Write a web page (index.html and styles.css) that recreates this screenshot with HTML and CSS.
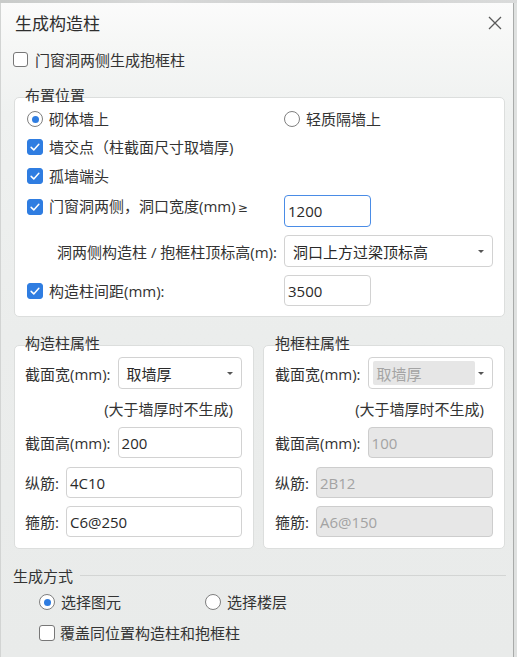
FILE: index.html
```html
<!DOCTYPE html>
<html lang="zh-CN">
<head>
<meta charset="utf-8">
<title>生成构造柱</title>
<link rel="stylesheet" href="styles.css">
</head>
<body>
<div class="strip"></div>
<div class="window">
  <div class="titlebar">
    <div class="title">生成构造柱</div>
    <svg class="close" width="14" height="14" viewBox="0 0 14 14"><path d="M1 1 L13 13 M13 1 L1 13" stroke="#5a5a5a" stroke-width="1.3" fill="none"/></svg>
  </div>

  <label class="toprow"><span class="cb"></span><span>门窗洞两侧生成抱框柱</span></label>

  <div class="panel panel-main">
    <div class="legend legend-main">布置位置</div>
    <div class="grow r1">
      <label class="opt"><span class="radio on"></span><span>砌体墙上</span></label>
      <label class="opt"><span class="radio"></span><span>轻质隔墙上</span></label>
    </div>
    <div class="grow r2">
      <label class="opt"><span class="cb on"><svg viewBox="0 0 16 16"><path d="M3.6 8.4 L6.6 11.3 L12.4 4.8" fill="none" stroke="#fff" stroke-width="1.7" stroke-linecap="round" stroke-linejoin="round"/></svg></span><span>墙交点（柱截面尺寸取墙厚)</span></label>
    </div>
    <div class="grow r3">
      <label class="opt"><span class="cb on"><svg viewBox="0 0 16 16"><path d="M3.6 8.4 L6.6 11.3 L12.4 4.8" fill="none" stroke="#fff" stroke-width="1.7" stroke-linecap="round" stroke-linejoin="round"/></svg></span><span>孤墙端头</span></label>
    </div>
    <div class="grow r4">
      <label class="opt top"><span class="cb on"><svg viewBox="0 0 16 16"><path d="M3.6 8.4 L6.6 11.3 L12.4 4.8" fill="none" stroke="#fff" stroke-width="1.7" stroke-linecap="round" stroke-linejoin="round"/></svg></span><span>门窗洞两侧，洞口宽度(mm)<span class="ge">≥</span></span></label>
      <div class="input short focus">1200</div>
    </div>
    <div class="grow r5">
      <div class="rlabel">洞两侧构造柱 / 抱框柱顶标高(m):</div>
      <div class="select"><span>洞口上方过梁顶标高</span><span class="arrow"></span></div>
    </div>
    <div class="grow r6">
      <label class="opt"><span class="cb on"><svg viewBox="0 0 16 16"><path d="M3.6 8.4 L6.6 11.3 L12.4 4.8" fill="none" stroke="#fff" stroke-width="1.7" stroke-linecap="round" stroke-linejoin="round"/></svg></span><span>构造柱间距(mm):</span></label>
      <div class="input short">3500</div>
    </div>
  </div>

  <div class="pair">
    <div class="panel sub left">
      <div class="legend">构造柱属性</div>
      <div class="frow fa"><span class="flabel">截面宽(mm):</span><div class="select"><span>取墙厚</span><span class="arrow"></span></div></div>
      <div class="note">(大于墙厚时不生成)</div>
      <div class="frow fc"><span class="flabel">截面高(mm):</span><div class="input">200</div></div>
      <div class="frow fd"><span class="flabel">纵筋:</span><div class="input">4C10</div></div>
      <div class="frow fe"><span class="flabel">箍筋:</span><div class="input">C6@250</div></div>
    </div>
    <div class="panel sub right">
      <div class="legend">抱框柱属性</div>
      <div class="frow fa"><span class="flabel">截面宽(mm):</span><div class="select disabled"><span class="dis-fill">取墙厚</span><span class="arrow"></span></div></div>
      <div class="note">(大于墙厚时不生成)</div>
      <div class="frow fc"><span class="flabel">截面高(mm):</span><div class="input disabled">100</div></div>
      <div class="frow fd"><span class="flabel">纵筋:</span><div class="input disabled">2B12</div></div>
      <div class="frow fe"><span class="flabel">箍筋:</span><div class="input disabled">A6@150</div></div>
    </div>
  </div>

  <div class="section-head"><span>生成方式</span><span class="rule"></span></div>
  <div class="mode-row">
    <label class="opt first"><span class="radio on"></span><span>选择图元</span></label>
    <label class="opt"><span class="radio"></span><span>选择楼层</span></label>
  </div>
  <div class="mode-row cover">
    <label class="opt"><span class="cb"></span><span>覆盖同位置构造柱和抱框柱</span></label>
  </div>
</div>
</body>
</html>
```

FILE: styles.css
```css
* { box-sizing: border-box; }

html, body {
  margin: 0;
  padding: 0;
}

body {
  width: 517px;
  height: 657px;
  overflow: hidden;
  font-family: "Open Sans", "Noto Sans CJK SC", sans-serif;
  font-size: 15px;
  color: #333;
  background: #dfe1e0;
}

.strip {
  height: 3px;
  background: linear-gradient(90deg, #c9cbca 0, #d8d9d9 30%, #cfd0d0 60%, #dadbdb 100%);
}

.window {
  width: 514px;
  height: 654px;
  border-left: 1px solid #d2d4d3;
  border-right: 1px solid #a9abaa;
  background: linear-gradient(180deg, #fbfbfb 0px, #f6f7f6 40px, #eff1f0 110px, #ebedec 330px, #e9ebea 654px);
}

.titlebar {
  height: 41px;
  display: flex;
  align-items: center;
  justify-content: space-between;
  padding: 0 11px 4px 14px;
}

.title {
  font-size: 17px;
  line-height: 24px;
  color: #2e2e2e;
  margin-top: 4px;
}

.close {
  width: 14px;
  height: 14px;
  margin-top: 2px;
}

.toprow {
  height: 30px;
  display: flex;
  align-items: center;
  gap: 7px;
  padding-left: 12px;
}

.toprow .cb {
  width: 15px;
  height: 15px;
}

/* indicators */
.cb {
  width: 16px;
  height: 16px;
  border: 1px solid #777;
  border-radius: 3px;
  background: #fff;
  display: inline-flex;
  flex: none;
}

.cb.on {
  background: #2f7de1;
  border-color: #2f7de1;
}

.cb svg {
  width: 14px;
  height: 14px;
}

.radio {
  width: 16px;
  height: 16px;
  border: 1px solid #7f7f7f;
  border-radius: 50%;
  background: #fff;
  display: inline-flex;
  align-items: center;
  justify-content: center;
  flex: none;
}

.radio.on::after {
  content: "";
  width: 7px;
  height: 7px;
  border-radius: 50%;
  background: #2f7de1;
}

.opt {
  display: flex;
  align-items: center;
  gap: 6px;
  line-height: 22px;
  white-space: nowrap;
}

.ge {
  font-family: "DejaVu Sans", sans-serif;
  font-size: 12px;
  margin-left: 2px;
}

/* panels */
.panel {
  background: #fff;
  border: 1px solid #dcdedd;
  border-radius: 5px;
}

.legend {
  line-height: 18px;
  height: 18px;
  margin-top: -12px;
  color: #333;
}

.panel-main {
  margin: 23px 8px 0 13px;
  padding: 0 11px 10px 12px;
}

.legend-main {
  margin-left: -2px;
  margin-bottom: 1px;
}

.grow {
  display: grid;
  grid-template-columns: 257px 1fr;
  align-items: center;
}

.r1, .r2 { height: 28px; }
.r3 { height: 29px; }
.r4 { margin-top: 5px; height: 32px; align-items: start; }
.r5 { margin-top: 8px; height: 32px; }
.r6 { margin-top: 8px; height: 31px; }

.rlabel {
  text-align: right;
  padding-right: 7px;
  white-space: nowrap;
}

.input {
  height: 100%;
  border: 1px solid #d2d2d2;
  border-radius: 4px;
  background: #fff;
  padding: 0 3px;
  display: flex;
  align-items: center;
  color: #2a2a2a;
  flex: 1;
}

.input.short {
  width: 87px;
  flex: none;
}

.input.focus {
  border-color: #4a8ce6;
}

.select {
  height: 100%;
  border: 1px solid #d2d2d2;
  border-radius: 4px;
  background: #fff;
  display: flex;
  align-items: center;
  justify-content: space-between;
  padding: 0 8px 0 8px;
  flex: 1;
  color: #2a2a2a;
}

.arrow {
  width: 0;
  height: 0;
  border-left: 3px solid transparent;
  border-right: 3px solid transparent;
  border-top: 3px solid #555;
  margin-top: 1px;
}

.pair {
  display: flex;
  gap: 9px;
  margin: 28px 8px 0 13px;
}

.sub {
  padding: 0 11px 11px 10px;
}

.sub.left { width: 240px; flex: none; }
.sub.right { flex: 1; padding-left: 11px; }

.frow {
  display: flex;
  align-items: center;
  gap: 7px;
}

.flabel {
  white-space: nowrap;
}

.fa { margin-top: 5px; height: 32px; }
.fc { height: 31px; }
.fd { margin-top: 9px; height: 31px; }
.fe { margin-top: 8px; height: 31px; }

.note {
  height: 38px;
  display: flex;
  align-items: center;
  justify-content: flex-end;
  padding-right: 9px;
}

.select.disabled {
  padding: 3px 8px 3px 4px;
}

.dis-fill {
  height: 100%;
  width: 102px;
  background: #e6e6e6;
  border-radius: 2px;
  color: #a4a4a4;
  display: flex;
  align-items: center;
  padding-left: 4px;
}

.input.disabled {
  background: #e7e7e7;
  border-color: #cdcdcd;
  color: #a3a3a3;
}

.section-head {
  margin-top: 16px;
  height: 20px;
  display: flex;
  align-items: center;
  gap: 7px;
  padding-left: 12px;
  padding-right: 7px;
}

.rule {
  flex: 1;
  height: 1px;
  background: #d3d5d4;
}

.mode-row {
  margin-top: 4px;
  height: 26px;
  display: flex;
  align-items: center;
  padding-left: 38px;
}

.mode-row .first {
  width: 166px;
}

.mode-row.cover {
  margin-top: 5px;
}

.cover .opt { gap: 5px; }
```
